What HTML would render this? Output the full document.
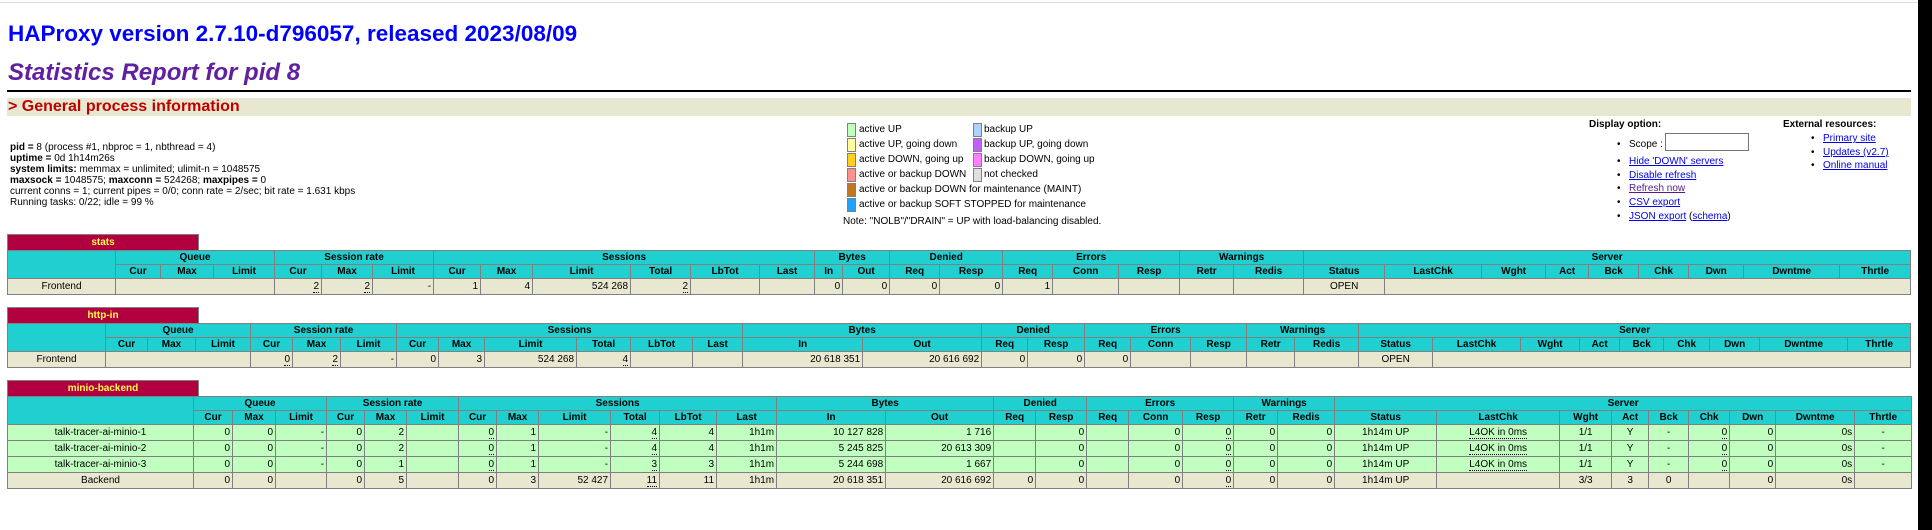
<!DOCTYPE html>
<html><head><meta charset="utf-8"><style>
*{margin:0;padding:0;box-sizing:border-box}
body{width:1932px;height:530px;position:relative;background:#fff;font-family:"Liberation Sans",Arial,sans-serif;color:#000;overflow:hidden}
.a{position:absolute;white-space:nowrap}
h1{position:absolute;left:8px;top:20px;font-size:22.5px;line-height:28px;color:#0000ff;font-weight:bold}
h2{position:absolute;left:8px;top:59px;font-size:24px;line-height:28px;color:#6020a0;font-weight:bold;font-style:italic}
.rule{position:absolute;left:7px;top:90px;width:1904px;height:2px;background:#000}
.h3{position:absolute;left:7px;top:98px;width:1904px;height:18px;background:#e8e8d0;color:#c00000;font-weight:bold;font-size:16px;line-height:18px;padding-left:1px}
.info{position:absolute;left:10px;top:142px;font-size:10px;line-height:11px}
.lg{position:absolute;font-size:10px;line-height:15px}
.sw{position:absolute;width:9px;height:14px;border:1px solid #808080}
.opt{font-size:10px;line-height:13.5px}
a{color:#0000ee;text-decoration:underline}
.ttl{position:absolute;left:7px;width:192px;height:17px;background:#b00040;border:1px solid #808080;color:#ffff40;font-weight:bold;font-size:10px;text-align:center;line-height:15px}
table{position:absolute;left:7px;width:1904px;border-collapse:collapse;table-layout:fixed;font-size:10px}
td,th{border:1px solid #808080;padding:0 2px;white-space:nowrap;overflow:hidden}
th{background:#20d0d0;font-weight:bold;height:14px;line-height:13px;text-align:center}
td{height:16px;line-height:15px;text-align:right}
tr.f td{background:#e8e8d0}
tr.u td{background:#c0ffc0}
td.c{text-align:center}
u{text-decoration:none;border-bottom:1px dotted #000}
</style></head><body>
<div class="a" style="left:0;top:2px;width:1932px;height:1px;background:#dcdcdc"></div>
<div class="a" style="left:1918px;top:0;width:14px;height:530px;background:#000"></div>
<h1>HAProxy version 2.7.10-d796057, released 2023/08/09</h1>
<h2>Statistics Report for pid 8</h2>
<div class="rule"></div>
<div class="h3">&gt; General process information</div>
<div class="info">
<b>pid = </b>8 (process #1, nbproc = 1, nbthread = 4)<br>
<b>uptime = </b>0d 1h14m26s<br>
<b>system limits:</b> memmax = unlimited; ulimit-n = 1048575<br>
<b>maxsock = </b>1048575; <b>maxconn = </b>524268; <b>maxpipes = </b>0<br>
current conns = 1; current pipes = 0/0; conn rate = 2/sec; bit rate = 1.631 kbps<br>
Running tasks: 0/22; idle = 99 %
</div>

<div class="sw" style="left:847px;top:123px;background:#c0ffc0"></div><div class="a lg" style="left:859px;top:122px">active UP</div>
<div class="sw" style="left:847px;top:138px;background:#ffffa0"></div><div class="a lg" style="left:859px;top:137px">active UP, going down</div>
<div class="sw" style="left:847px;top:153px;background:#ffd020"></div><div class="a lg" style="left:859px;top:152px">active DOWN, going up</div>
<div class="sw" style="left:847px;top:168px;background:#ff9090"></div><div class="a lg" style="left:859px;top:167px">active or backup DOWN</div>
<div class="sw" style="left:847px;top:183px;background:#c07820"></div><div class="a lg" style="left:859px;top:182px">active or backup DOWN for maintenance (MAINT)</div>
<div class="sw" style="left:847px;top:198px;background:#20a0ff"></div><div class="a lg" style="left:859px;top:197px">active or backup SOFT STOPPED for maintenance</div>
<div class="sw" style="left:973px;top:123px;background:#b0d0ff"></div><div class="a lg" style="left:984px;top:122px">backup UP</div>
<div class="sw" style="left:973px;top:138px;background:#c060ff"></div><div class="a lg" style="left:984px;top:137px">backup UP, going down</div>
<div class="sw" style="left:973px;top:153px;background:#ff80ff"></div><div class="a lg" style="left:984px;top:152px">backup DOWN, going up</div>
<div class="sw" style="left:973px;top:168px;background:#e0e0e0"></div><div class="a lg" style="left:984px;top:167px">not checked</div>
<div class="a lg" style="left:843px;top:214px">Note: "NOLB"/"DRAIN" = UP with load-balancing disabled.</div>

<div class="a opt" style="left:1589px;top:118px"><b>Display option:</b></div>
<div class="a opt" style="left:1617px;top:138px">•</div><div class="a opt" style="left:1629px;top:138px">Scope :</div>
<div class="a" style="left:1665px;top:133px;width:84px;height:18px;border:1px solid #767676;background:#fff"></div>
<div class="a opt" style="left:1617px;top:155px">•</div><div class="a opt" style="left:1629px;top:155px"><a>Hide 'DOWN' servers</a></div>
<div class="a opt" style="left:1617px;top:169px">•</div><div class="a opt" style="left:1629px;top:169px"><a>Disable refresh</a></div>
<div class="a opt" style="left:1617px;top:182px">•</div><div class="a opt" style="left:1629px;top:182px"><a style="color:#551a8b">Refresh now</a></div>
<div class="a opt" style="left:1617px;top:196px">•</div><div class="a opt" style="left:1629px;top:196px"><a>CSV export</a></div>
<div class="a opt" style="left:1617px;top:210px">•</div><div class="a opt" style="left:1629px;top:210px"><a>JSON export</a> (<a>schema</a>)</div>
<div class="a opt" style="left:1783px;top:118px"><b>External resources:</b></div>
<div class="a opt" style="left:1811px;top:132px">•</div><div class="a opt" style="left:1823px;top:132px"><a>Primary site</a></div>
<div class="a opt" style="left:1811px;top:146px">•</div><div class="a opt" style="left:1823px;top:146px"><a>Updates (v2.7)</a></div>
<div class="a opt" style="left:1811px;top:159px">•</div><div class="a opt" style="left:1823px;top:159px"><a>Online manual</a></div>

<!-- stats -->
<div class="ttl" style="top:234px">stats</div>
<table style="top:250px">
<colgroup><col style="width:108px"><col style="width:45px"><col style="width:53px"><col style="width:61px"><col style="width:47px"><col style="width:51px"><col style="width:61px"><col style="width:47px"><col style="width:52px"><col style="width:98px"><col style="width:60px"><col style="width:69px"><col style="width:55px"><col style="width:28px"><col style="width:47px"><col style="width:50px"><col style="width:63px"><col style="width:50px"><col style="width:66px"><col style="width:61px"><col style="width:54px"><col style="width:70px"><col style="width:81px"><col style="width:97px"><col style="width:64px"><col style="width:43px"><col style="width:50px"><col style="width:50px"><col style="width:55px"><col style="width:96px"><col style="width:71px"></colgroup>
<tr><th rowspan="2"></th><th colspan="3">Queue</th><th colspan="3">Session rate</th><th colspan="6">Sessions</th><th colspan="2">Bytes</th><th colspan="2">Denied</th><th colspan="3">Errors</th><th colspan="2">Warnings</th><th colspan="9">Server</th></tr>
<tr><th>Cur</th><th>Max</th><th>Limit</th><th>Cur</th><th>Max</th><th>Limit</th><th>Cur</th><th>Max</th><th>Limit</th><th>Total</th><th>LbTot</th><th>Last</th><th>In</th><th>Out</th><th>Req</th><th>Resp</th><th>Req</th><th>Conn</th><th>Resp</th><th>Retr</th><th>Redis</th><th>Status</th><th>LastChk</th><th>Wght</th><th>Act</th><th>Bck</th><th>Chk</th><th>Dwn</th><th>Dwntme</th><th>Thrtle</th></tr>
<tr class="f"><td class="c">Frontend</td><td colspan="3"></td><td><u>2</u></td><td><u>2</u></td><td>-</td><td>1</td><td>4</td><td>524 268</td><td><u>2</u></td><td></td><td></td><td>0</td><td>0</td><td>0</td><td>0</td><td>1</td><td></td><td></td><td></td><td></td><td class="c">OPEN</td><td colspan="8"></td></tr>
</table>

<!-- http-in -->
<div class="ttl" style="top:307px">http-in</div>
<table style="top:323px">
<colgroup><col style="width:98px"><col style="width:42px"><col style="width:48px"><col style="width:55px"><col style="width:42px"><col style="width:48px"><col style="width:56px"><col style="width:42px"><col style="width:46px"><col style="width:92px"><col style="width:54px"><col style="width:62px"><col style="width:50px"><col style="width:120px"><col style="width:119px"><col style="width:46px"><col style="width:57px"><col style="width:46px"><col style="width:60px"><col style="width:56px"><col style="width:48px"><col style="width:64px"><col style="width:74px"><col style="width:88px"><col style="width:59px"><col style="width:40px"><col style="width:44px"><col style="width:46px"><col style="width:50px"><col style="width:88px"><col style="width:63px"></colgroup>
<tr><th rowspan="2"></th><th colspan="3">Queue</th><th colspan="3">Session rate</th><th colspan="6">Sessions</th><th colspan="2">Bytes</th><th colspan="2">Denied</th><th colspan="3">Errors</th><th colspan="2">Warnings</th><th colspan="9">Server</th></tr>
<tr><th>Cur</th><th>Max</th><th>Limit</th><th>Cur</th><th>Max</th><th>Limit</th><th>Cur</th><th>Max</th><th>Limit</th><th>Total</th><th>LbTot</th><th>Last</th><th>In</th><th>Out</th><th>Req</th><th>Resp</th><th>Req</th><th>Conn</th><th>Resp</th><th>Retr</th><th>Redis</th><th>Status</th><th>LastChk</th><th>Wght</th><th>Act</th><th>Bck</th><th>Chk</th><th>Dwn</th><th>Dwntme</th><th>Thrtle</th></tr>
<tr class="f"><td class="c">Frontend</td><td colspan="3"></td><td><u>0</u></td><td><u>2</u></td><td>-</td><td>0</td><td>3</td><td>524 268</td><td><u>4</u></td><td></td><td></td><td>20 618 351</td><td>20 616 692</td><td>0</td><td>0</td><td>0</td><td></td><td></td><td></td><td></td><td class="c">OPEN</td><td colspan="8"></td></tr>
</table>

<!-- minio-backend -->
<div class="ttl" style="top:380px;height:17px">minio-backend</div>
<table style="top:396px">
<colgroup><col style="width:186px"><col style="width:39px"><col style="width:43px"><col style="width:51px"><col style="width:38px"><col style="width:42px"><col style="width:52px"><col style="width:38px"><col style="width:42px"><col style="width:72px"><col style="width:49px"><col style="width:57px"><col style="width:60px"><col style="width:109px"><col style="width:108px"><col style="width:42px"><col style="width:51px"><col style="width:42px"><col style="width:54px"><col style="width:51px"><col style="width:44px"><col style="width:57px"><col style="width:102px"><col style="width:123px"><col style="width:52px"><col style="width:37px"><col style="width:40px"><col style="width:41px"><col style="width:46px"><col style="width:79px"><col style="width:57px"></colgroup>
<tr><th rowspan="2"></th><th colspan="3">Queue</th><th colspan="3">Session rate</th><th colspan="6">Sessions</th><th colspan="2">Bytes</th><th colspan="2">Denied</th><th colspan="3">Errors</th><th colspan="2">Warnings</th><th colspan="9">Server</th></tr>
<tr><th>Cur</th><th>Max</th><th>Limit</th><th>Cur</th><th>Max</th><th>Limit</th><th>Cur</th><th>Max</th><th>Limit</th><th>Total</th><th>LbTot</th><th>Last</th><th>In</th><th>Out</th><th>Req</th><th>Resp</th><th>Req</th><th>Conn</th><th>Resp</th><th>Retr</th><th>Redis</th><th>Status</th><th>LastChk</th><th>Wght</th><th>Act</th><th>Bck</th><th>Chk</th><th>Dwn</th><th>Dwntme</th><th>Thrtle</th></tr>
<tr class="u"><td class="c">talk-tracer-ai-minio-1</td><td>0</td><td>0</td><td>-</td><td>0</td><td>2</td><td></td><td><u>0</u></td><td>1</td><td>-</td><td><u>4</u></td><td>4</td><td>1h1m</td><td>10 127 828</td><td>1 716</td><td></td><td>0</td><td></td><td>0</td><td><u>0</u></td><td>0</td><td>0</td><td class="c">1h14m UP</td><td class="c"><u>L4OK in 0ms</u></td><td class="c">1/1</td><td class="c">Y</td><td class="c">-</td><td><u>0</u></td><td>0</td><td>0s</td><td class="c">-</td></tr>
<tr class="u"><td class="c">talk-tracer-ai-minio-2</td><td>0</td><td>0</td><td>-</td><td>0</td><td>2</td><td></td><td><u>0</u></td><td>1</td><td>-</td><td><u>4</u></td><td>4</td><td>1h1m</td><td>5 245 825</td><td>20 613 309</td><td></td><td>0</td><td></td><td>0</td><td><u>0</u></td><td>0</td><td>0</td><td class="c">1h14m UP</td><td class="c"><u>L4OK in 0ms</u></td><td class="c">1/1</td><td class="c">Y</td><td class="c">-</td><td><u>0</u></td><td>0</td><td>0s</td><td class="c">-</td></tr>
<tr class="u"><td class="c">talk-tracer-ai-minio-3</td><td>0</td><td>0</td><td>-</td><td>0</td><td>1</td><td></td><td><u>0</u></td><td>1</td><td>-</td><td><u>3</u></td><td>3</td><td>1h1m</td><td>5 244 698</td><td>1 667</td><td></td><td>0</td><td></td><td>0</td><td><u>0</u></td><td>0</td><td>0</td><td class="c">1h14m UP</td><td class="c"><u>L4OK in 0ms</u></td><td class="c">1/1</td><td class="c">Y</td><td class="c">-</td><td><u>0</u></td><td>0</td><td>0s</td><td class="c">-</td></tr>
<tr class="f"><td class="c">Backend</td><td>0</td><td>0</td><td></td><td>0</td><td>5</td><td></td><td>0</td><td>3</td><td>52 427</td><td><u>11</u></td><td>11</td><td>1h1m</td><td>20 618 351</td><td>20 616 692</td><td>0</td><td>0</td><td></td><td>0</td><td><u>0</u></td><td>0</td><td>0</td><td class="c">1h14m UP</td><td></td><td class="c">3/3</td><td class="c">3</td><td class="c">0</td><td></td><td>0</td><td>0s</td><td></td></tr>
</table>
</body></html>
